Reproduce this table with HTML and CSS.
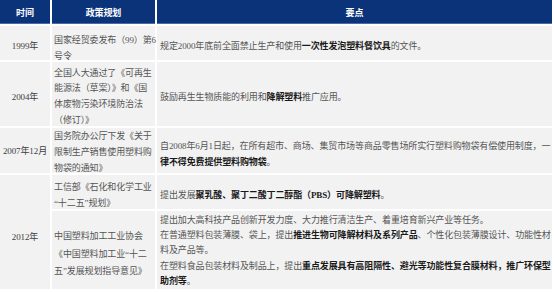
FILE: index.html
```html
<!DOCTYPE html>
<html lang="zh-CN">
<head>
<meta charset="utf-8">
<title>塑料政策</title>
<link rel="stylesheet" href="styles.css">
</head>
<body>
<table class="policy">
  <colgroup>
    <col class="c-time">
    <col class="c-plan">
    <col class="c-point">
  </colgroup>
  <thead>
    <tr class="r-head">
      <th>时间</th>
      <th>政策规划</th>
      <th>要点</th>
    </tr>
  </thead>
  <tbody>
    <tr class="r-1999">
      <td class="time sh"><span class="ln">1999年</span></td>
      <td class="plan sh5"><span class="ln">国家经贸委发布（99）第6</span><span class="ln">号令</span></td>
      <td class="point sh"><span class="ln">规定2000年底前全面禁止生产和使用<b>一次性发泡塑料餐饮具</b>的文件。</span></td>
    </tr>
    <tr class="r-2004">
      <td class="time sh"><span class="ln">2004年</span></td>
      <td class="plan sh four"><span class="ln">全国人大通过了《可再生</span><span class="ln">能源法（草案）》和《国</span><span class="ln">体废物污染环境防治法</span><span class="ln">（修订）》</span></td>
      <td class="point sh"><span class="ln">鼓励再生生物质能的利用和<b>降解塑料</b>推广应用。</span></td>
    </tr>
    <tr class="r-2007">
      <td class="time"><span class="ln">2007年12月</span></td>
      <td class="plan tight"><span class="ln">国务院办公厅下发《关于</span><span class="ln">限制生产销售使用塑料购</span><span class="ln">物袋的通知》</span></td>
      <td class="point sh"><span class="ln">自2008年6月1日起，在所有超市、商场、集贸市场等商品零售场所实行塑料购物袋有偿使用制度，一</span><span class="ln"><b>律不得免费提供塑料购物袋</b>。</span></td>
    </tr>
    <tr class="r-2012a">
      <td class="time sh5" rowspan="2"><span class="ln">2012年</span></td>
      <td class="plan sh"><span class="ln">工信部《石化和化学工业</span><span class="ln">“十二五”规划》</span></td>
      <td class="point sh"><span class="ln">提出发展<b>聚乳酸、聚丁二酸丁二醇酯（PBS）可降解塑料</b>。</span></td>
    </tr>
    <tr class="r-2012b">
      <td class="plan tall"><span class="ln">中国塑料加工工业协会</span><span class="ln">《中国塑料加工业“十二</span><span class="ln">五”发展规划指导意见》</span></td>
      <td class="point dense"><span class="ln">提出加大高科技产品创新开发力度、大力推行清洁生产、着重培育新兴产业等任务。</span><span class="ln">在普通塑料包装薄膜、袋上，提出<b>推进生物可降解材料及系列产品</b>、个性化包装薄膜设计、功能性材</span><span class="ln">料及产品等。</span><span class="ln">在塑料食品包装材料及制品上，提出<b>重点发展具有高阻隔性、避光等功能性复合膜材料，推广环保型</b></span><span class="ln"><b>助剂等</b>。</span></td>
    </tr>
  </tbody>
</table>
</body>
</html>
```

FILE: styles.css
```css
html, body {
  margin: 0;
  padding: 0;
  background: #ffffff;
}

.policy {
  width: 552px;
  table-layout: fixed;
  border-collapse: separate;
  border-spacing: 0;
  font-family: "Liberation Serif", "Noto Sans CJK SC", serif;
  font-size: 9px;
  line-height: 16px;
  letter-spacing: -0.12px;
  color: #555555;
}

.c-time { width: 52px; }
.c-plan { width: 105px; }
.c-point { width: 395px; }

.policy th,
.policy td {
  padding: 0;
  border-right: 2px solid #ffffff;
  border-bottom: 2px solid #ffffff;
  vertical-align: middle;
}

.policy th:last-child,
.policy td.point {
  border-right: 0;
}

.policy th {
  background: #0b337a;
  color: #ffffff;
  font-weight: bold;
  text-align: center;
  padding-top: 1px;
  box-shadow: inset 0 -1px 0 #4a6aa3;
}

.policy td {
  background: #f2f2f2;
}

.r-head { height: 26px; }
.r-1999 { height: 36px; }
.r-2004 { height: 66px; }
.r-2007 { height: 47px; }
.r-2012a { height: 36px; }
.r-2012b { height: 79px; }

.ln {
  display: block;
  white-space: nowrap;
}

.time {
  text-align: center;
  color: #404040;
}

.policy td.plan {
  padding-left: 2px;
  text-align: left;
}

.policy td.point {
  padding-left: 3px;
  text-align: left;
}

/* text sits a little low in its cell, as in the source document */
.policy td.sh { padding-top: 3px; }
.policy td.sh > .ln:last-child { margin-bottom: -3px; }

.policy td.sh5 { padding-top: 5px; }
.policy td.sh5 > .ln:last-child { margin-bottom: -5px; }

.policy td.tight > .ln:last-child { margin-bottom: -3px; }

.policy td.four { line-height: 15.6px; }

.policy td.tall {
  line-height: 17.5px;
  vertical-align: top;
  padding-top: 17px;
}

.policy td.dense {
  line-height: 15.2px;
  padding-top: 2px;
}

.point b {
  color: #1a1a1a;
  font-weight: bold;
}
```
